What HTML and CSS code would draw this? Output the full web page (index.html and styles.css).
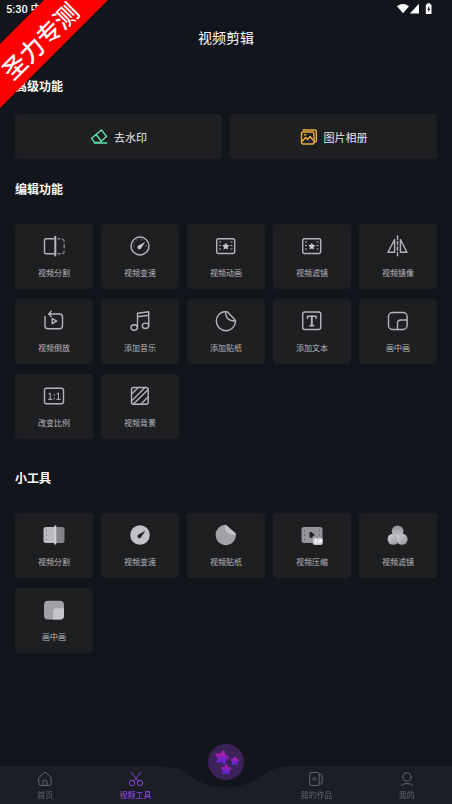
FILE: index.html
```html
<!DOCTYPE html>
<html lang="zh-CN">
<head>
<meta charset="utf-8">
<meta name="viewport" content="width=device-width, initial-scale=1">
<title>视频剪辑</title>
<link rel="stylesheet" href="styles.css">
</head>
<body>
<div class="status">
  <span>5:30 中</span>
  <svg class="status-icons" viewBox="0 0 36 12" aria-hidden="true">
    <path fill="#fff" d="M0 3.2Q6 -1.2 12 3.2L6 10.3Z M22 .8V10.6H12.8Z M28.800 1.400h1.500V.2h2.700v1.200h1.500v9.600h-5.700z"/>
    <path fill="#12151c" d="M32.200 3l-2 3.500h1.200v2.800l2-3.600h-1.200z"/>
  </svg>
</div>
<div class="ribbon"><span>圣力专测</span></div>
<header class="title"><h1>视频剪辑</h1></header>

<main>
  <section class="group">
    <h2>高级功能</h2>
    <div class="features">
      <button class="feature" type="button">
        <svg viewBox="0 0 18 18" class="line mint"><path d="M1.500 10.200L11.500 2l5 6.400-6.800 6H4.500zM6.200 6.800l5.300 6.400M4.500 15h12.300"/></svg>
        <span>去水印</span>
      </button>
      <button class="feature" type="button">
        <svg viewBox="0 0 18 18" class="line gold"><rect x="1.500" y="4" width="12.500" height="12" rx="1.500"/><path d="M3 2h12q1.300 0 1.300 1.300v10l-1.800 1M2.500 13l3.200-3.500 2 2 2.300-3 3.500 4M4.500 6.700h1.300"/></svg>
        <span>图片相册</span>
      </button>
    </div>
  </section>

  <section class="group">
    <h2>编辑功能</h2>
    <div class="tiles">
      <button class="tile" type="button">
        <svg viewBox="0 0 24 24" class="line"><path d="M12 4.700H4Q2.500 4.700 2.500 6.200v12.100q0 1.500 1.500 1.500h8"/><path class="heavy" d="M13.300 2.800v18.700"/><path class="faint" d="M16 4.700h2M20.500 5.200q1.700.4 1.700 2M22.200 10.500v3.300M22.200 17.300q0 2-1.700 2.300M16 19.800h2"/></svg>
        <span>视频分割</span>
      </button>
      <button class="tile" type="button">
        <svg viewBox="0 0 24 24" class="line"><circle cx="12" cy="12" r="9"/><path class="tick" d="M5.800 8.500l.7.4M9 5.500l.3.800M13.500 5.200v.8M5.300 12h.8M18 12h.8"/><path class="fill" d="M17.300 7.700l-4 6.300a2 2 0 1 1-2.600-2.600z"/></svg>
        <span>视频变速</span>
      </button>
      <button class="tile" type="button">
        <svg viewBox="0 0 24 24" class="line"><rect x="2.700" y="4.700" width="18" height="14.800" rx="2"/><path class="perf" d="M6 7.500v10M17.500 7.500v10"/><path class="fill" d="M11.800 8.700l1.200 2.100 2.400.4-1.700 1.800.3 2.400-2.200-1-2.200 1 .3-2.400-1.700-1.800 2.400-.4z"/></svg>
        <span>视频动画</span>
      </button>
      <button class="tile" type="button">
        <svg viewBox="0 0 24 24" class="line"><rect x="2.700" y="4.700" width="18" height="14.800" rx="2"/><path class="perf" d="M6 7.500v10M17.500 7.500v10"/><path class="fill" d="M11.800 8.700l1.200 2.100 2.400.4-1.700 1.800.3 2.400-2.200-1-2.200 1 .3-2.400-1.700-1.800 2.400-.4z"/></svg>
        <span>视频滤镜</span>
      </button>
      <button class="tile" type="button">
        <svg viewBox="0 0 24 24" class="line"><path d="M8.600 5.500v12.800H2zM14.400 5.500v12.800H21z"/><path d="M11.500 2v3.200M11.500 7.500v3.200M11.500 13v3.200M11.500 18.500v3.300"/></svg>
        <span>视频镜像</span>
      </button>
      <button class="tile" type="button">
        <svg viewBox="0 0 24 24" class="line"><path d="M3 7.500v9.300q0 3 3 3h11.500q3 0 3-3V8q0-3-3-3H7.200M9.300 2.300L6.700 5l2.600 2.600"/><path d="M10.200 9.700v5l4.500-2.500z"/></svg>
        <span>视频倒放</span>
      </button>
      <button class="tile" type="button">
        <svg viewBox="0 0 24 24" class="line"><ellipse cx="6.200" cy="18.500" rx="3.200" ry="2.700"/><ellipse cx="17.500" cy="16.800" rx="3.200" ry="2.700"/><path d="M9.500 18.500V4.300L20.700 2.800v14M9.500 7.700l11.200-1.500"/></svg>
        <span>添加音乐</span>
      </button>
      <button class="tile" type="button">
        <svg viewBox="0 0 24 24" class="line"><path d="M11.800 2.500a9.600 9.600 0 1 0 9.700 9.800q-.1-1-.8-1.700L13.800 3.300q-.8-.8-2-.8zM11.800 2.500q-.8 9.800 9.700 9.500"/></svg>
        <span>添加贴纸</span>
      </button>
      <button class="tile" type="button">
        <svg viewBox="0 0 24 24" class="line"><rect x="2.700" y="3" width="18" height="17.500" rx="2"/><path d="M7.500 9.500V7.200h8.600v2.300"/><path class="heavy" d="M11.800 7.500v9"/><path d="M9.800 16.700h4"/></svg>
        <span>添加文本</span>
      </button>
      <button class="tile" type="button">
        <svg viewBox="0 0 24 24" class="line"><rect x="2.500" y="3.500" width="18.600" height="17" rx="4"/><path d="M11.500 20.500v-6.200q0-3.300 3.300-3.300h6.300"/></svg>
        <span>画中画</span>
      </button>
      <button class="tile" type="button">
        <svg viewBox="0 0 24 24" class="line"><rect x="2.500" y="4.300" width="19" height="15.500" rx="2"/><path class="thin" d="M6.700 9.700l1.500-.7v6.300M6.500 15.300h3.500M15 9.700l1.500-.7v6.300M14.800 15.300h3.500M12.200 10.400v1M12.200 14v1"/></svg>
        <span>改变比例</span>
      </button>
      <button class="tile" type="button">
        <svg viewBox="0 0 24 24" class="line"><rect x="3.500" y="3.500" width="16.700" height="16.700" rx="2"/><path d="M3.700 10l6.300-6.300M4 16.500L16.500 4M5.500 20L20 5.700M13 20l7-7"/></svg>
        <span>视频背景</span>
      </button>
    </div>
  </section>

  <section class="group">
    <h2>小工具</h2>
    <div class="tiles">
      <button class="tile" type="button">
        <svg viewBox="0 0 24 24"><path fill="#bbbcc2" d="M4 4h9v16H4q-2.500 0-2.500-2.500v-11Q1.500 4 4 4z"/><path fill="#85868c" d="M14 4h6q2.500 0 2.500 2.500v11Q22.500 20 20 20h-6z"/><path fill="#d0d1d6" d="M12.300 2.500h2v19h-2z"/><path stroke="#77787e" stroke-dasharray="1.500 3" d="M4.500 6.800v11M19.800 6.800v11"/></svg>
        <span>视频分割</span>
      </button>
      <button class="tile" type="button">
        <svg viewBox="0 0 24 24"><circle cx="12" cy="12" r="9.800" fill="#c1c2c7"/><path fill="#202124" d="M17.300 7.700l-4 6.300a2 2 0 1 1-2.600-2.600z"/></svg>
        <span>视频变速</span>
      </button>
      <button class="tile" type="button">
        <svg viewBox="0 0 24 24"><path fill="#a1a2a8" d="M11 1.800a10.200 10.200 0 1 0 11 9.500z"/><path fill="#c1c2c8" d="M11 1.800q1.200 0 1.800.6l8.600 7.600q.6.600.5 1.700Q10 13.500 11 1.800z"/></svg>
        <span>视频贴纸</span>
      </button>
      <button class="tile" type="button">
        <svg viewBox="0 0 24 24"><rect x="1.500" y="4" width="21" height="16" rx="2.500" fill="#94959b"/><path stroke="#5e5f65" stroke-dasharray="1.500 3" d="M4.500 6.800v11M19.500 6.800v6"/><path fill="#202124" d="M9.500 9.300l2-.3 3.300 2.700-3.300 3.200-2-.4z"/><rect x="12.800" y="15" width="10" height="7" rx="2" fill="#c6c7cd"/><path fill="none" stroke="#fff" d="M14.500 16.800h2.200l-2 3.200h2.200M18.300 16.500v4M20 20.500v-3.800h1.600v2H20"/></svg>
        <span>视频压缩</span>
      </button>
      <button class="tile" type="button">
        <svg viewBox="0 0 24 24"><defs><linearGradient id="shade" x1="0" y1="0" x2="1" y2="1"><stop offset="0" stop-color="#d0d1d6"/><stop offset="1" stop-color="#94959b"/></linearGradient><linearGradient id="drop" x1="0" y1="0" x2="0" y2="1"><stop offset="0" stop-color="#909197"/><stop offset="1" stop-color="#c4c5ca"/></linearGradient></defs><circle cx="7.200" cy="16.200" r="5.600" fill="url(#shade)"/><circle cx="16" cy="16.200" r="5.600" fill="url(#shade)"/><circle cx="11.600" cy="8.200" r="5.800" fill="url(#drop)"/></svg>
        <span>视频滤镜</span>
      </button>
      <button class="tile" type="button">
        <svg viewBox="0 0 24 24"><rect x="2" y="2.800" width="20" height="18.800" rx="4" fill="#a0a1a6"/><path fill="#c4c5cb" d="M11 21.600v-8.300q0-3 3-3h8v7.300q0 4-4 4z"/></svg>
        <span>画中画</span>
      </button>
    </div>
  </section>
</main>

<nav class="nav" aria-label="主导航">
  <div class="nav-back" aria-hidden="true">
    <i></i>
    <svg viewBox="0 0 144 38"><path d="M0 0C30 0 34 9 46 15.500Q58 21.500 72 21.500T98 15.500C110 9 114 0 144 0V38H0z"/></svg>
    <i></i>
  </div>
  <a class="nav-item" href="#home">
    <svg viewBox="0 0 16 16"><path d="M1.800 6.700L6.500 2.200q1.500-1.400 3 0l4.700 4.500v5.800q0 2-2 2H3.800q-2 0-2-2zM6 14.300v-4q0-1 1-1h2q1 0 1 1v4"/></svg>
    <span>首页</span>
  </a>
  <a class="nav-item active" href="#tools" aria-current="page">
    <svg viewBox="0 0 16 16"><circle cx="4" cy="12" r="2.700"/><circle cx="12" cy="12" r="2.700"/><path d="M3 1.200l7.300 8.900M13 1.200L5.700 10.100"/></svg>
    <span>视频工具</span>
  </a>
  <a class="fab" href="#create" aria-label="创作">
    <svg viewBox="0 0 36 36"><defs><linearGradient id="glow" x1="0" y1="0" x2="0" y2="1"><stop offset="0" stop-color="#b41da5"/><stop offset="1" stop-color="#5726d2"/></linearGradient></defs>
      <g fill="url(#glow)" stroke="url(#glow)" stroke-width="2" stroke-linejoin="round"><path d="M15.500 7.500l1.100 4.200 3.900 1.500-3.400 2.200-.2 4.300-3.500-2.800-4 1.200 1.500-4-2.600-3.500 4.300-.1z"/><path d="M27 13.500l1 2.200 2.300.4-1.700 1.600.3 2.300-2-1.100-2.200 1 .5-2.300-1.500-1.700 2.300-.3z"/><path d="M18.300 21.300l1.100 2.700 3 .5-2.200 2 .4 3-2.600-1.500-2.800 1.300.7-3-2-2.200 3-.3z"/></g></svg>
  </a>
  <a class="nav-item" href="#works">
    <svg viewBox="0 0 16 16"><rect x="1.700" y="1.500" width="9.500" height="13" rx="1.500"/><path d="M11.300 3.300h1.500q1.400 0 1.400 1.400v6.800q0 1.500-1.400 1.500h-1.500M6.500 6.200L8.200 8 6.500 9.800 4.800 8z"/></svg>
    <span>我的作品</span>
  </a>
  <a class="nav-item" href="#me">
    <svg viewBox="0 0 16 16"><circle cx="8" cy="6" r="4.200"/><path d="M2.500 14.500Q4 12.500 8 12.500t5.500 2"/></svg>
    <span>我的</span>
  </a>
</nav>
</body>
</html>
```
FILE: styles.css
```css
* { box-sizing: border-box; }

body {
  margin: 0;
  min-height: 100vh;
  padding-bottom: 64px;
  background: #12151c;
  color: #fff;
  font-family: Roboto, "Noto Sans CJK SC", sans-serif;
}

h1, h2 { margin: 0; }
a { text-decoration: none; }
button { border: 0; padding: 0; font: inherit; cursor: pointer; }

.status {
  display: flex;
  justify-content: space-between;
  align-items: center;
  height: 18px;
  padding: 0 19px 0 6px;
  font-size: 11px;
  font-weight: 500;
  line-height: 16px;
}
.status span { padding-top: 2px; }
.status-icons { width: 36px; height: 12px; }

.ribbon {
  position: absolute;
  top: 0;
  left: 0;
  display: grid;
  place-content: center;
  width: 108px;
  height: 108px;
  padding: 0 26px 24px 0;
  background: #fe0000;
  clip-path: polygon(44px 0, 100% 0, 0 100%, 0 44px);
}
.ribbon span {
  font-size: 24px;
  font-weight: 500;
  line-height: 24px;
  white-space: nowrap;
  transform: rotate(-45deg);
}

.title {
  display: grid;
  place-items: center;
  height: 40px;
}
.title h1 { font-size: 14px; font-weight: 400; line-height: 20px; }

main { padding: 19px 15px 0; }
.group h2 {
  font-size: 12px;
  font-weight: 700;
  line-height: 20px;
}

.features {
  display: grid;
  grid-template-columns: 1fr 1fr;
  gap: 8px;
  margin: 17px 0 21px;
}
.feature {
  display: flex;
  align-items: center;
  justify-content: center;
  gap: 6px;
  height: 45px;
  border-radius: 4px;
  background: #1e1f21;
  color: #e8e8ea;
  font-size: 11px;
}
.feature svg { width: 18px; height: 18px; }

.tiles {
  display: grid;
  grid-template-columns: repeat(5, 1fr);
  gap: 10px 8px;
  margin: 24px 0 30px;
}
.tile {
  display: flex;
  flex-direction: column;
  align-items: center;
  gap: 10px;
  height: 65px;
  padding-top: 10px;
  border-radius: 4px;
  background: #1e1f21;
  color: #b9babf;
  font-size: 8px;
  line-height: 12px;
}
.tile svg { width: 24px; height: 24px; }

.line {
  fill: none;
  stroke: #b4b5bb;
  stroke-width: 1.4;
  stroke-linecap: round;
  stroke-linejoin: round;
}
.line .heavy { stroke-width: 2; }
.line .thin { stroke-width: 1; }
.line .tick { stroke: #77787d; stroke-width: 1; }
.line .faint { stroke: #85868b; }
.line .fill { fill: #c4c5ca; stroke: none; }
.line .perf { stroke-linecap: butt; stroke-dasharray: 1 2.5; stroke-width: 2; }
.mint { stroke: #62e2ad; }
.gold { stroke: #e9b040; }

.nav {
  position: fixed;
  right: 0;
  bottom: 0;
  left: 0;
  display: grid;
  grid-template-columns: repeat(5, 1fr);
  height: 38px;
}
.nav-back {
  position: absolute;
  inset: 0;
  z-index: -1;
  display: flex;
}
.nav-back i { flex: 1; background: #1c1e26; }
.nav-back svg { width: 144px; height: 38px; fill: #1c1e26; }
.nav-item {
  display: flex;
  flex-direction: column;
  align-items: center;
  gap: 3px;
  padding-top: 5px;
  color: #666770;
  font-size: 8px;
  line-height: 12px;
}
.nav-item svg {
  width: 16px;
  height: 16px;
  fill: none;
  stroke: currentColor;
  stroke-linecap: round;
  stroke-linejoin: round;
}
.nav-item.active { color: #8645d6; font-weight: 500; }
.fab {
  justify-self: center;
  width: 36px;
  height: 36px;
  margin-top: -22px;
  border-radius: 50%;
  background: #3b2359;
}
.fab svg { display: block; width: 36px; height: 36px; }
```
